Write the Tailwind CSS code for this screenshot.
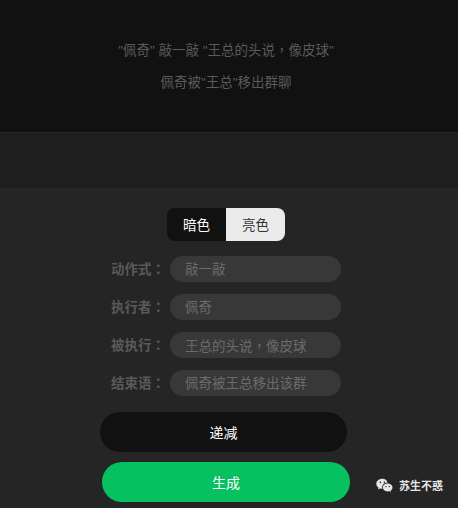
<!DOCTYPE html>
<html lang="zh-CN">
<head>
    <meta charset="UTF-8">
    <meta name="viewport" content="width=device-width, initial-scale=1.0">
    <script src="https://cdn.jsdelivr.net/npm/@tailwindcss/browser@4"></script>
    <title>拍一拍生成器</title>
</head>
<body class="relative h-[508px] w-[458px] overflow-hidden bg-[#252525] font-['Liberation_Sans','Noto_Sans_CJK_SC',sans-serif] text-[13.5px]">
    <!-- preview -->
    <div class="h-[133px] bg-[#111111] border-b border-[#262626] pt-[39px] pr-[6px] text-center text-[#5a5a5a]">
        <p class="h-5 leading-5">"佩奇" 敲一敲 "王总的头说<span lang="zh-TW" class="font-['Noto_Sans_CJK_TC']">，</span>像皮球"</p>
        <p class="h-5 leading-5 mt-[14px]">佩奇被"王总"移出群聊</p>
    </div>
    <div class="h-[55px] bg-[#1e1e1e]"></div>

    <!-- form -->
    <div class="pt-5 flex flex-col">
        <div class="ml-[167px] flex h-[33px] w-[118px] overflow-hidden rounded-lg leading-[35px] text-center">
            <div class="w-[59px] bg-[#111111] text-white">暗色</div>
            <div class="w-[59px] bg-[#ebebeb] text-[#333333]">亮色</div>
        </div>
        <div class="mt-[15px] flex flex-col gap-3 pl-[111px]">
            <div class="flex items-center">
                <span class="w-[59px] font-bold text-[#595959]">动作式<span lang="zh-TW" class="font-['Noto_Sans_CJK_TC']">：</span></span>
                <div class="h-[26px] w-[171px] rounded-full bg-[#383838] pl-[15px] leading-[27px] text-[#6b6b6b]">敲一敲</div>
            </div>
            <div class="flex items-center">
                <span class="w-[59px] font-bold text-[#595959]">执行者<span lang="zh-TW" class="font-['Noto_Sans_CJK_TC']">：</span></span>
                <div class="h-[26px] w-[171px] rounded-full bg-[#383838] pl-[15px] leading-[27px] text-[#6b6b6b]">佩奇</div>
            </div>
            <div class="flex items-center">
                <span class="w-[59px] font-bold text-[#595959]">被执行<span lang="zh-TW" class="font-['Noto_Sans_CJK_TC']">：</span></span>
                <div class="h-[26px] w-[171px] rounded-full bg-[#383838] pl-[15px] leading-[27px] text-[#6b6b6b]">王总的头说<span lang="zh-TW" class="font-['Noto_Sans_CJK_TC']">，</span>像皮球</div>
            </div>
            <div class="flex items-center">
                <span class="w-[59px] font-bold text-[#595959]">结束语<span lang="zh-TW" class="font-['Noto_Sans_CJK_TC']">：</span></span>
                <div class="h-[26px] w-[171px] rounded-full bg-[#383838] pl-[15px] leading-[27px] text-[#6b6b6b]">佩奇被王总移出该群</div>
            </div>
        </div>
        <button class="ml-[100px] mt-4 h-10 w-[247px] rounded-full bg-[#111111] pt-0.5 text-sm text-white">递减</button>
        <button class="ml-[102px] mt-2.5 h-10 w-[248px] rounded-full bg-[#07c160] pt-0.5 text-sm text-white">生成</button>
    </div>

    <!-- watermark -->
    <div class="absolute left-[376px] top-[478px] flex items-center gap-[6px] text-[11px] font-bold text-[#e6e6e6]">
        <svg class="w-[17px] h-[16px]" viewBox="0 0 17 16" fill="#e6e6e6">
            <path d="M6.5 0.8C3 0.8 0.3 3 0.3 5.8c0 1.6 0.9 3 2.3 3.9L2 11.6l2.2-1.2c0.7 0.2 1.4 0.3 2.1 0.3-0.2-0.5-0.2-1-0.2-1.4 0-2.6 2.4-4.6 5.4-4.6C11 2.4 9 0.8 6.5 0.8z"/>
            <path d="M11.6 5.6c-2.7 0-4.8 1.7-4.8 3.9s2.1 3.9 4.8 3.9c0.6 0 1.1-0.1 1.7-0.3l1.8 1.1-0.5-1.7c1.2-0.7 1.9-1.8 1.9-3 0-2.2-2.2-3.9-4.9-3.9z"/>
            <circle cx="4.4" cy="4.4" r="0.8" fill="#252525"/>
            <circle cx="8.4" cy="4.4" r="0.8" fill="#252525"/>
            <circle cx="10" cy="8.6" r="0.7" fill="#252525"/>
            <circle cx="13.4" cy="8.6" r="0.7" fill="#252525"/>
        </svg>
        <span>苏生不惑</span>
    </div>
</body>
</html>
